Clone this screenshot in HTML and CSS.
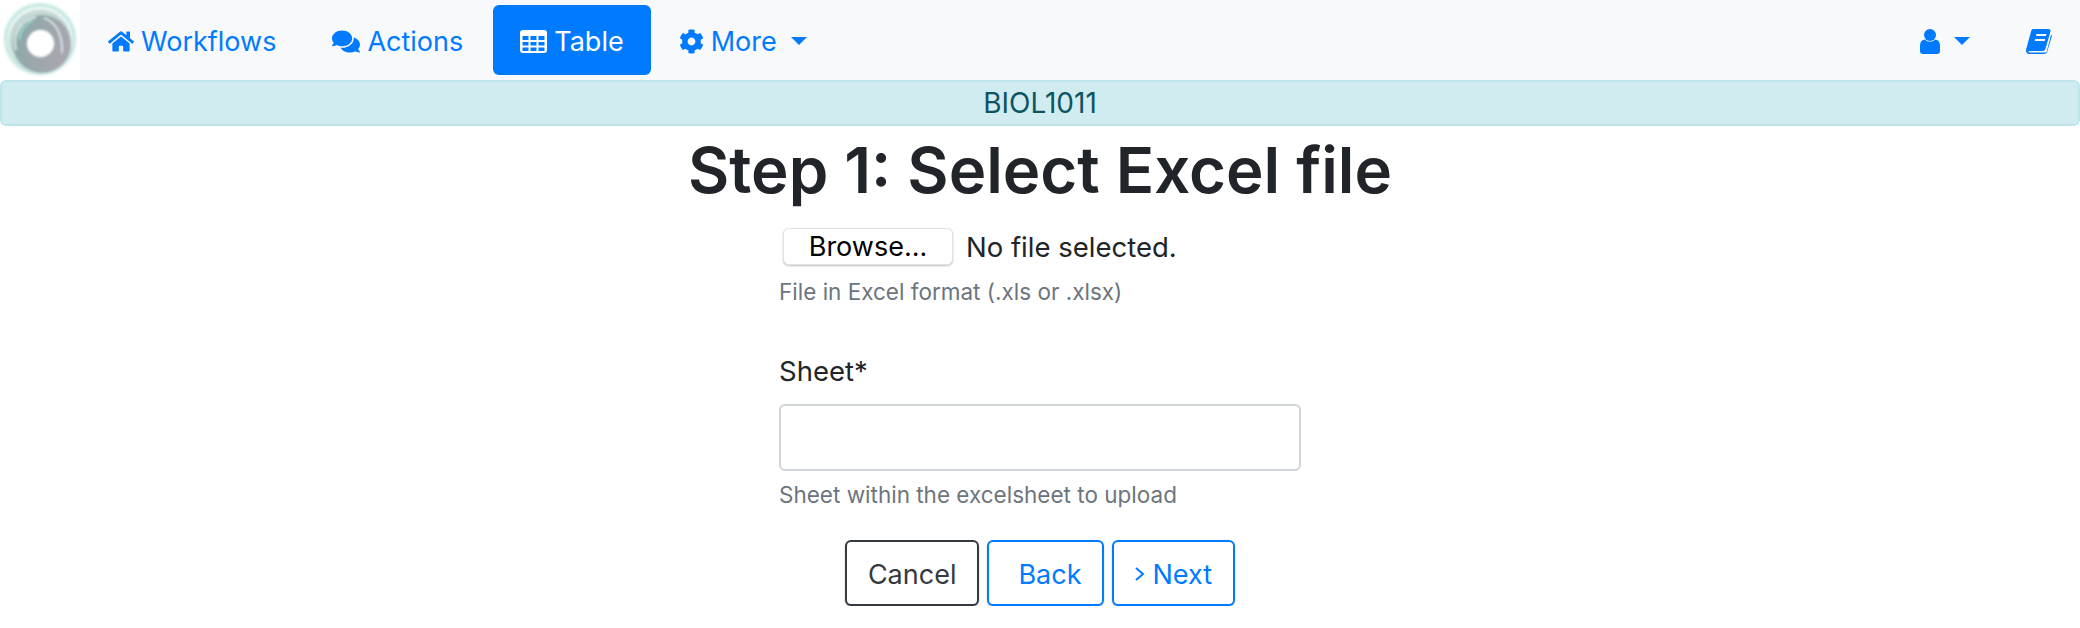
FILE: index.html
```html
<!DOCTYPE html>
<html>
	<head>
		<meta charset="utf-8">
		<title>Step 1: Select Excel file</title>
		<link rel="stylesheet" href="styles.css">
	</head>
	<body>
		<nav class="navbar">
			<a class="logo" href="#">
				<svg width="80" height="80" viewBox="0 0 80 80">
					<defs>
						<filter id="soft"><feGaussianBlur stdDeviation="1"/></filter>
						<linearGradient id="disk" x1="0" y1="0" x2="1" y2="0.4">
							<stop offset="0" stop-color="#86aaa8"/>
							<stop offset="1" stop-color="#a9a6af"/>
						</linearGradient>
					</defs>
					<g filter="url(#soft)">
						<circle cx="40" cy="39" r="37" fill="#e8f5f3"/>
						<circle cx="40" cy="39" r="34" fill="none" stroke="#bfe8e0" stroke-width="2.500"/>
						<circle cx="40" cy="41" r="31" fill="#c4d8d5"/>
						<circle cx="42" cy="44" r="29" fill="url(#disk)"/>
						<path d="M16 50C12 33 22 20 36 17" fill="none" stroke="#eef6f5" stroke-width="1.500"/>
						<path d="M44 18C56 22 63 35 62 53" fill="none" stroke="#e6eeee" stroke-width="1.500"/>
						<path d="M19 40C20 30 26 24 33 20" fill="none" stroke="#9be2d3" stroke-width="1.500"/>
						<circle cx="40.500" cy="43.500" r="13.500" fill="#fff"/>
					</g>
				</svg>
			</a>
			<ul class="nav-links">
				<li>
					<a class="nav-link" href="#">
						<svg class="icon" width="26" height="23" viewBox="0 0 576 512"><path d="M280.37 148.26L96 300.11V464a16 16 0 0 0 16 16l112.06-.29a16 16 0 0 0 15.92-16V368a16 16 0 0 1 16-16h64a16 16 0 0 1 16 16v95.64a16 16 0 0 0 16 16.05L464 480a16 16 0 0 0 16-16V300L295.67 148.26a12.19 12.19 0 0 0-15.3 0zM571.6 251.47L488 182.56V44.05a12 12 0 0 0-12-12h-56a12 12 0 0 0-12 12v72.61L318.47 43a48 48 0 0 0-61 0L4.34 251.47a12 12 0 0 0-1.6 16.9l25.5 31A12 12 0 0 0 45.15 301l235.22-193.74a12.19 12.19 0 0 1 15.3 0L530.9 301a12 12 0 0 0 16.9-1.6l25.5-31a12 12 0 0 0-1.7-16.93z"/></svg>
						Workflows
					</a>
				</li>
				<li>
					<a class="nav-link" href="#">
						<svg class="icon" width="28" height="25" viewBox="0 0 576 512"><path d="M416 192c0-88.4-93.1-160-208-160S0 103.6 0 192c0 34.3 14.1 65.9 38 92-13.4 30.2-35.5 54.2-35.8 54.5-2.2 2.3-2.8 5.7-1.500 8.700S4.800 352 8 352c36.600 0 66.900-12.300 88.700-25 32.200 15.700 70.300 25 111.300 25 114.900 0 208-71.600 208-160zm122 220c23.900-26 38-57.700 38-92 0-66.900-53.500-124.200-129.300-148.100.9 6.600 1.300 13.300 1.300 20.100 0 105.900-107.700 192-240 192-10.800 0-21.300-.8-31.700-1.900C207.800 439.600 281.800 480 368 480c41 0 79.100-9.200 111.300-25 21.800 12.700 52.100 25 88.700 25 3.200 0 6.100-1.900 7.300-4.800 1.300-2.900.7-6.300-1.500-8.700-.3-.3-22.400-24.200-35.800-54.500z"/></svg>
						Actions
					</a>
				</li>
				<li>
					<a class="nav-link active" href="#">
						<svg class="icon" width="27" height="23" viewBox="0 0 27 23"><path fill-rule="evenodd" d="M3 0h21a3 3 0 0 1 3 3v17a3 3 0 0 1-3 3H3a3 3 0 0 1-3-3V3a3 3 0 0 1 3-3zM2.500 6v4h6V6zm8 0v4h6V6zm8 0v4h6V6zM2.500 12v3.500h6V12zm8 0v3.500h6V12zm8 0v3.500h6V12zM2.500 17.500V21h6v-3.500zm8 0V21h6v-3.500zm8 0V21h6v-3.500z"/></svg>
						Table
					</a>
				</li>
				<li>
					<a class="nav-link" href="#">
						<svg class="icon" width="25" height="25" viewBox="0 0 512 512"><path d="M487.400 315.700l-42.600-24.600c4.300-23.200 4.300-47 0-70.200l42.600-24.600c4.900-2.800 7.100-8.600 5.500-14-11.100-35.600-30-67.800-54.700-94.600-3.800-4.100-10-5.100-14.800-2.300L380.800 110c-17.900-15.400-38.500-27.300-60.800-35.100V25.800c0-5.600-3.900-10.500-9.400-11.700-36.700-8.200-74.300-7.800-109.200 0-5.500 1.200-9.400 6.100-9.400 11.700V75c-22.200 7.900-42.800 19.800-60.800 35.100L88.700 85.500c-4.900-2.800-11-1.900-14.800 2.300-24.700 26.700-43.600 58.900-54.700 94.600-1.700 5.400.6 11.200 5.500 14L67.300 221c-4.300 23.200-4.300 47 0 70.200l-42.600 24.600c-4.900 2.800-7.100 8.600-5.500 14 11.100 35.600 30 67.800 54.700 94.600 3.800 4.100 10 5.100 14.800 2.300l42.600-24.600c17.900 15.400 38.500 27.300 60.800 35.100v49.200c0 5.600 3.900 10.500 9.400 11.700 36.700 8.200 74.300 7.800 109.200 0 5.500-1.200 9.400-6.100 9.400-11.700v-49.200c22.200-7.900 42.800-19.800 60.800-35.100l42.600 24.600c4.900 2.800 11 1.900 14.800-2.300 24.700-26.700 43.600-58.900 54.700-94.600 1.500-5.500-.7-11.300-5.600-14.100zM256 336c-44.100 0-80-35.900-80-80s35.900-80 80-80 80 35.900 80 80-35.900 80-80 80z"/></svg>
						More
						<span class="caret"></span>
					</a>
				</li>
			</ul>
			<ul class="nav-links nav-right">
				<li>
					<a class="nav-link" href="#">
						<svg class="icon" width="20" height="25" viewBox="0 0 20 25"><circle cx="10" cy="6" r="6"/><path d="M5 10.500C6.400 12 8 12.700 10 12.700s3.600-.7 5-2.200c3.200.3 5 2.600 5 6V22a3 3 0 0 1-3 3H3a3 3 0 0 1-3-3v-5.500c0-3.400 1.800-5.700 5-6z"/></svg>
						<span class="caret"></span>
					</a>
				</li>
				<li>
					<a class="nav-link" href="#">
						<svg class="icon" width="26" height="25" viewBox="0 0 26 25"><path fill-rule="evenodd" d="M7 0h15.500c1.600 0 2.300 1.200 1.900 2.700l-5 17.300c-.4 1.300-1.200 2-2.700 2H3.500c-.9 0-1.300.7-1 1.100.3.300.7.400 1.300.4h15.400c.8 0 1.300-.4 1.600-1.300L25 5.800l1 .8-4.700 16c-.5 1.500-1.400 2.400-3 2.400H3.500C1.200 25 0 23.400 0 21.500c0-.7.100-1.100.3-1.800L5 2.500C5.400 1 6 0 7 0zm3.500 5l-.5 2h10l.5-2zm-1.300 5l-.5 2h10l.5-2z"/></svg>
					</a>
				</li>
			</ul>
		</nav>

		<div class="alert">BIOL1011</div>

		<h1 class="title">Step 1: Select Excel file</h1>

		<form class="upload-form">
			<div class="file-row">
				<button class="browse" type="button">Browse...</button>
				<span class="file-name">No file selected.</span>
			</div>
			<small class="help help-file">File in Excel format (.xls or .xlsx)</small>

			<label class="field-label" for="sheet">Sheet*</label>
			<input class="field-input" id="sheet" type="text">
			<small class="help help-sheet">Sheet within the excelsheet to upload</small>

			<div class="actions">
				<button class="btn btn-dark" type="button">Cancel</button>
				<button class="btn btn-blue btn-back" type="button">Back</button>
				<button class="btn btn-blue btn-next" type="button">
					<svg width="11" height="20" viewBox="0 0 11 20"><path d="M2 4l7 6-7 6" fill="none" stroke="#007bff" stroke-width="2"/></svg>
					Next
				</button>
			</div>
		</form>
	</body>
</html>
```

FILE: styles.css
```css
*{margin: 0;padding: 0;box-sizing: border-box;}
ul,li{list-style: none;}
a{text-decoration: none;}
body{
	background: #fff;
	color: #212529;
	font-family: Inter, "Liberation Sans", sans-serif;
	font-size: 27px;
}

.navbar{display: flex;align-items: center;height: 80px;background: #f8f9fa;}
.logo{display: block;width: 80px;height: 80px;background: #fff;}
.logo svg{display: block;}
.nav-links{display: flex;align-items: center;}
.nav-right{margin-left: auto;}
.nav-link{
	display: flex;
	align-items: center;
	gap: 7px;
	height: 70px;
	padding: 2px 28px 0;
	border-radius: 6px;
	color: #007bff;
	font-size: 27px;
}
.nav-link.active{margin-left: 2px;padding: 2px 27px 0;background: #007bff;color: #fff;}
.icon{fill: currentColor;flex: none;}
.caret{
	width: 0;
	height: 0;
	margin-left: 7px;
	border-top: 8px solid currentColor;
	border-left: 8px solid transparent;
	border-right: 8px solid transparent;
}

.alert{
	height: 46px;
	background: #d1ecf1;
	border: 2px solid #bee5eb;
	border-radius: 6px;
	color: #0c5460;
	font-size: 28px;
	line-height: 43px;
	text-align: center;
}

.title{
	margin-top: 10px;
	font-size: 63.5px;
	font-weight: 600;
	line-height: 68px;
	text-align: center;
}

.upload-form{width: 522px;margin: 0 auto;}
.file-row{display: flex;align-items: center;gap: 13px;margin-top: 24px;padding-left: 4px;}
.browse{
	width: 170px;
	height: 37px;
	background: #fff;
	border: 1px solid #e3e3e3;
	border-radius: 6px;
	box-shadow: 0 1px 2px rgba(0,0,0,.25);
	color: #000;
	font-family: inherit;
	font-size: 27px;
}
.file-name{font-size: 27.5px;}
.help{display: block;color: #6c757d;font-size: 22.5px;line-height: 30px;}
.help-file{margin-top: 12px;}
.field-label{display: block;margin-top: 48px;font-size: 27.5px;line-height: 32px;}
.field-input{
	display: block;
	width: 100%;
	height: 67px;
	margin-top: 17px;
	background: #fff;
	border: 2px solid #ced4da;
	border-radius: 6px;
}
.help-sheet{margin-top: 9px;}

.actions{display: flex;justify-content: center;gap: 8px;margin-top: 30px;}
.btn{
	display: flex;
	align-items: center;
	justify-content: center;
	gap: 8px;
	height: 66px;
	padding: 2px 21px 0;
	background: #fff;
	border-radius: 6px;
	box-shadow: 0 1px 2px rgba(0,0,0,.25);
	font-family: inherit;
	font-size: 27px;
}
.btn-dark{border: 2px solid #343a40;color: #343a40;}
.btn-blue{border: 2px solid #007bff;color: #007bff;}
.btn-back{padding-left: 29px;padding-right: 20px;}
.btn-next{padding-left: 20px;padding-right: 21px;}
```
